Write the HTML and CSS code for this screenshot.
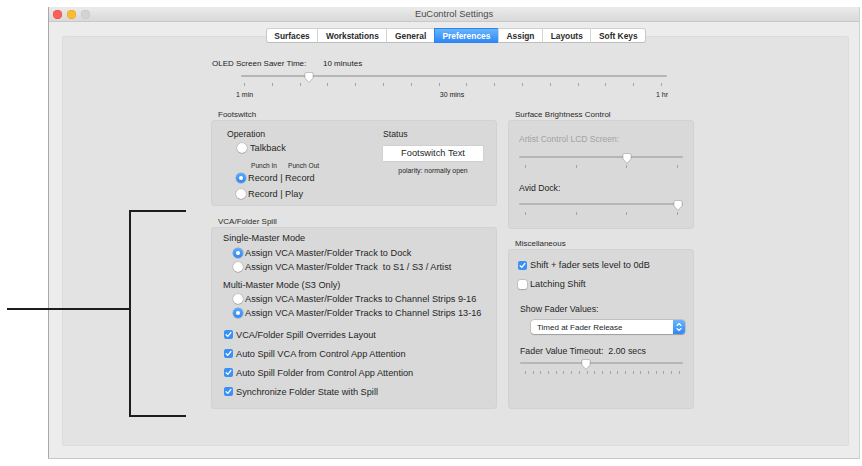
FILE: index.html
```html
<!DOCTYPE html>
<html>
<head>
<meta charset="utf-8">
<title>EuControl Settings</title>
<link rel="stylesheet" href="styles.css">
</head>
<body>
<div class="window">
  <div class="titlebar">
    <div class="lights"><span class="light red"></span><span class="light yellow"></span><span class="light gray"></span></div>
    <div class="title">EuControl Settings</div>
    <div></div>
  </div>
  <div class="content">
    <div class="tabs">
      <div class="tab">Surfaces</div>
      <div class="tab">Workstations</div>
      <div class="tab">General</div>
      <div class="tab active">Preferences</div>
      <div class="tab">Assign</div>
      <div class="tab">Layouts</div>
      <div class="tab">Soft Keys</div>
    </div>
    <div class="panel">
      <div class="oled">
        <div class="oled-head"><span class="oled-label">OLED Screen Saver Time:</span><span>10 minutes</span></div>
        <div class="oled-slider">
          <div class="slider">
            <div class="track"></div>
            <svg class="thumb" style="left:16%" viewBox="0 0 10 11"><path d="M1 1.8 Q1 0.5 2.3 0.5 H7.7 Q9 0.5 9 1.8 V6 L5 10.3 L1 6 Z" fill="#fff" stroke="#b0b0b0" stroke-width="0.6"/></svg>
          </div>
          <div class="ticks">
            <i></i><i></i><i></i><i></i><i></i><i></i><i></i><i></i><i></i><i></i><i></i><i></i><i></i><i></i><i></i><i></i>
          </div>
          <div class="scale"><span class="s-left">1 min</span><span class="s-mid">30 mins</span><span class="s-right">1 hr</span></div>
        </div>
      </div>

      <div class="columns">
        <div class="col col-left">
          <div class="group">
            <div class="group-label">Footswitch</div>
            <div class="box box-foot">
              <div class="op">
                <div class="heading">Operation</div>
                <div class="row big talk"><span class="radio"></span><span>Talkback</span></div>
                <div class="punch"><span class="punch-in">Punch In</span><span>Punch Out</span></div>
                <div class="row big rec1"><span class="radio on"></span><span>Record | Record</span></div>
                <div class="row big rec2"><span class="radio"></span><span>Record | Play</span></div>
              </div>
              <div class="status">
                <div class="heading">Status</div>
                <div class="field">Footswitch Text</div>
                <div class="polarity">polarity: normally open</div>
              </div>
            </div>
          </div>

          <div class="group">
            <div class="group-label">VCA/Folder Spill</div>
            <div class="box box-vca">
              <div class="mode">Single-Master Mode</div>
              <div class="radios">
                <div class="rrow"><span class="radio on"></span><span>Assign VCA Master/Folder Track to Dock</span></div>
                <div class="rrow"><span class="radio"></span><span>Assign VCA Master/Folder Track&nbsp; to S1 / S3 / Artist</span></div>
              </div>
              <div class="mode mode2">Multi-Master Mode (S3 Only)</div>
              <div class="radios radios2">
                <div class="rrow"><span class="radio"></span><span>Assign VCA Master/Folder Tracks to Channel Strips 9-16</span></div>
                <div class="rrow"><span class="radio on"></span><span>Assign VCA Master/Folder Tracks to Channel Strips 13-16</span></div>
              </div>
              <div class="checks">
                <div class="crow"><svg class="check" viewBox="0 0 9 9"><rect x="0" y="0" width="9" height="9" rx="2" fill="#3b90f5"/><path d="M2.1 4.7 L3.8 6.3 L6.9 2.5" stroke="#fff" stroke-width="1.2" fill="none" stroke-linecap="round" stroke-linejoin="round"/></svg><span>VCA/Folder Spill Overrides Layout</span></div>
                <div class="crow"><svg class="check" viewBox="0 0 9 9"><rect x="0" y="0" width="9" height="9" rx="2" fill="#3b90f5"/><path d="M2.1 4.7 L3.8 6.3 L6.9 2.5" stroke="#fff" stroke-width="1.2" fill="none" stroke-linecap="round" stroke-linejoin="round"/></svg><span>Auto Spill VCA from Control App Attention</span></div>
                <div class="crow"><svg class="check" viewBox="0 0 9 9"><rect x="0" y="0" width="9" height="9" rx="2" fill="#3b90f5"/><path d="M2.1 4.7 L3.8 6.3 L6.9 2.5" stroke="#fff" stroke-width="1.2" fill="none" stroke-linecap="round" stroke-linejoin="round"/></svg><span>Auto Spill Folder from Control App Attention</span></div>
                <div class="crow"><svg class="check" viewBox="0 0 9 9"><rect x="0" y="0" width="9" height="9" rx="2" fill="#3b90f5"/><path d="M2.1 4.7 L3.8 6.3 L6.9 2.5" stroke="#fff" stroke-width="1.2" fill="none" stroke-linecap="round" stroke-linejoin="round"/></svg><span>Synchronize Folder State with Spill</span></div>
              </div>
            </div>
          </div>
        </div>

        <div class="col col-right">
          <div class="group">
            <div class="group-label">Surface Brightness Control</div>
            <div class="box box-sbc">
              <div class="disabled lcd">Artist Control LCD Screen:</div>
              <div class="slider s1">
                <div class="track"></div>
                <svg class="thumb" style="left:66%" viewBox="0 0 10 11"><path d="M1 1.8 Q1 0.5 2.3 0.5 H7.7 Q9 0.5 9 1.8 V6 L5 10.3 L1 6 Z" fill="#fff" stroke="#b0b0b0" stroke-width="0.6"/></svg>
              </div>
              <div class="ticks ticks4"><i></i><i></i><i></i><i></i></div>
              <div class="dock">Avid Dock:</div>
              <div class="slider s2">
                <div class="track"></div>
                <svg class="thumb" style="left:97%" viewBox="0 0 10 11"><path d="M1 1.8 Q1 0.5 2.3 0.5 H7.7 Q9 0.5 9 1.8 V6 L5 10.3 L1 6 Z" fill="#fff" stroke="#b0b0b0" stroke-width="0.6"/></svg>
              </div>
              <div class="ticks ticks4"><i></i><i></i><i></i><i></i></div>
            </div>
          </div>

          <div class="group group-misc">
            <div class="group-label">Miscellaneous</div>
            <div class="box box-misc">
              <div class="crow mc1"><svg class="check" viewBox="0 0 9 9"><rect x="0" y="0" width="9" height="9" rx="2" fill="#3b90f5"/><path d="M2.1 4.7 L3.8 6.3 L6.9 2.5" stroke="#fff" stroke-width="1.2" fill="none" stroke-linecap="round" stroke-linejoin="round"/></svg><span>Shift + fader sets level to 0dB</span></div>
              <div class="crow mc2"><span class="check-off"></span><span>Latching Shift</span></div>
              <div class="misc-label sfv">Show Fader Values:</div>
              <div class="popup">
                <span class="popup-text">Timed at Fader Release</span>
                <span class="stepper"><svg viewBox="0 0 12 14" width="12" height="14"><path d="M4 5.5 L6 3.5 L8 5.5 M4 8.5 L6 10.5 L8 8.5" stroke="#fff" stroke-width="1.1" fill="none" stroke-linecap="round" stroke-linejoin="round"/></svg></span>
              </div>
              <div class="misc-label fvt">Fader Value Timeout:&nbsp; 2.00 secs</div>
              <div class="slider s3">
                <div class="track"></div>
                <svg class="thumb" style="left:40.5%" viewBox="0 0 10 11"><path d="M1 1.8 Q1 0.5 2.3 0.5 H7.7 Q9 0.5 9 1.8 V6 L5 10.3 L1 6 Z" fill="#fff" stroke="#b0b0b0" stroke-width="0.6"/></svg>
              </div>
              <div class="ticks ticks21"><i></i><i></i><i></i><i></i><i></i><i></i><i></i><i></i><i></i><i></i><i></i><i></i><i></i><i></i><i></i><i></i><i></i><i></i><i></i><i></i><i></i></div>
            </div>
          </div>
        </div>
      </div>
    </div>
  </div>
</div>

<div class="bracket">
  <div class="b-vert"></div>
  <div class="b-top"></div>
  <div class="b-bottom"></div>
  <div class="b-mid"></div>
</div>
</body>
</html>
```

FILE: styles.css
```css
* { box-sizing: border-box; }

html, body {
  margin: 0;
  padding: 0;
  background: #ffffff;
}

body {
  font-family: "Liberation Sans", Arial, sans-serif;
  color: #262626;
  font-size: 9.2px;
  width: 862px;
  height: 466px;
  overflow: hidden;
  position: relative;
}

/* window */
.window {
  margin: 7px 0 0 48px;
  width: 812px;
  height: 452px;
  background: #ececec;
  border-left: 1px solid #a9a9a9;
  border-right: 1px solid #d0d0d0;
  border-bottom: 1px solid #c8c8c8;
}

.titlebar {
  height: 15px;
  display: grid;
  grid-template-columns: 1fr auto 1fr;
  align-items: center;
  background: linear-gradient(#ebebeb, #d9d9d9);
  border-bottom: 1px solid #c9c9c9;
}

.lights {
  display: flex;
  gap: 5px;
  padding-left: 4px;
}

.light {
  width: 9px;
  height: 9px;
  border-radius: 50%;
  display: block;
}
.red { background: #fb5f57; box-shadow: inset 0 0 0 0.5px #e2463f; }
.yellow { background: #fdbc2e; box-shadow: inset 0 0 0 0.5px #e09e1f; }
.gray { background: #d3d3d3; box-shadow: inset 0 0 0 0.5px #c2c2c2; }

.title {
  font-size: 9.4px;
  color: #4a4a4a;
  line-height: 14px;
}

.content {
  padding-top: 6px;
}

/* tabs */
.tabs {
  display: flex;
  justify-content: center;
  position: relative;
  z-index: 1;
  height: 15px;
  margin-left: 4px;
}

.tab {
  height: 15px;
  line-height: 14px;
  padding: 0 7.6px;
  background: #ffffff;
  border-top: 1px solid #cfcfcf;
  border-bottom: 1px solid #bdbdbd;
  border-left: 1px solid #d4d4d4;
  font-size: 8.4px;
  font-weight: bold;
  color: #2b2b2b;
}
.tab:first-child { border-radius: 3px 0 0 3px; border-left: 1px solid #c8c8c8; }
.tab:last-child { border-radius: 0 3px 3px 0; border-right: 1px solid #c8c8c8; }
.tab.active {
  background: linear-gradient(#6ab4fb, #2e88f6);
  color: #ffffff;
  border-color: #2e84ee;
}

/* panel */
.panel {
  margin: -7px 10px 0 13px;
  height: 410px;
  background: #e3e3e3;
  border-radius: 3px;
  box-shadow: inset 0 0 0 1px #dcdcdc;
  padding-top: 23px;
}

.oled {
  margin-left: 150px;
}

.oled-head {
  display: flex;
  height: 10px;
  line-height: 10px;
  font-size: 8px;
  color: #222;
}
.oled-label { width: 111px; }

.oled-slider {
  margin-left: 29px;
  width: 426px;
  margin-top: 1px;
}

.slider {
  position: relative;
  height: 12px;
}
.track {
  position: absolute;
  left: 0;
  right: 0;
  top: 5px;
  height: 2px;
  border-radius: 1px;
  background: #b6b6b6;
}
.thumb {
  position: absolute;
  top: 2px;
  width: 10px;
  height: 11px;
  margin-left: -5px;
  filter: drop-shadow(0 0.5px 0.5px rgba(0,0,0,0.25));
}

.ticks {
  display: flex;
  justify-content: space-between;
  padding: 0 5px 0 3px;
  height: 4px;
  margin-top: 1px;
}
.ticks i {
  display: block;
  width: 1px;
  height: 3px;
  background: #a4a4a4;
}

.scale {
  display: grid;
  grid-template-columns: 1fr auto 1fr;
  margin: 3px -1px 0 -5px;
  font-size: 7px;
  line-height: 10px;
  color: #222;
}
.s-mid { justify-self: center; }
.s-right { justify-self: end; }

/* columns */
.columns {
  display: flex;
  gap: 11px;
  margin-left: 149px;
  margin-top: 10px;
}
.col { display: flex; flex-direction: column; gap: 11px; }
.col-left { width: 286px; }
.col-right { width: 186px; gap: 10px; }

.group-label {
  font-size: 8px;
  line-height: 10px;
  height: 10px;
  padding-left: 7px;
  color: #2a2a2a;
}

.box {
  background: #d9d9d9;
  border-radius: 4px;
  box-shadow: inset 0 0 0 1px #d2d2d2;
}

/* footswitch */
.box-foot {
  height: 86px;
  display: grid;
  grid-template-columns: 156px 100px;
  padding: 9px 0 0 16px;
}

.heading {
  font-size: 8.7px;
  line-height: 10px;
  height: 10px;
}

.row {
  display: flex;
  align-items: center;
  height: 10px;
  gap: 3px;
}
.talk { margin-top: 4px; padding-left: 10px; }
.rec1 { margin-top: 3px; padding-left: 9px; gap: 2px; }
.rec2 { margin-top: 6px; padding-left: 9px; gap: 2px; }

.punch {
  margin-top: 9px;
  height: 8px;
  line-height: 8px;
  font-size: 6.6px;
  padding-left: 24px;
  display: flex;
}
.punch-in { width: 37px; }

.radio {
  display: block;
  flex: none;
  width: 10px;
  height: 10px;
  border-radius: 50%;
  background: #ffffff;
  box-shadow: 0 0 0 0.5px rgba(0,0,0,0.2), 0 0.5px 1px rgba(0,0,0,0.2);
  position: relative;
}
.radio.on {
  background: linear-gradient(#5aa9f9, #2f87f3);
  box-shadow: 0 0 0 0.5px rgba(30,100,200,0.5);
}
.radio.on::after {
  content: "";
  position: absolute;
  left: 3px;
  top: 3px;
  width: 4px;
  height: 4px;
  border-radius: 50%;
  background: #ffffff;
}

.field {
  margin-top: 7px;
  height: 15px;
  line-height: 15px;
  background: #ffffff;
  text-align: center;
  font-size: 9.3px;
  box-shadow: 0 0 0 0.5px #c8c8c8;
}
.polarity {
  margin-top: 6px;
  text-align: center;
  font-size: 6.9px;
  line-height: 8px;
}

/* VCA */
.box-vca {
  height: 182px;
  padding: 6px 0 0 12px;
}
.mode {
  height: 10px;
  line-height: 10px;
}
.mode2 { margin-top: 6px; }
.radios { margin-top: 3px; padding-left: 10px; }
.radios2 { margin-top: 2px; }
.rrow {
  display: flex;
  align-items: center;
  gap: 2px;
  height: 14px;
}

.checks {
  margin-top: 5px;
  padding-left: 1px;
}
.crow {
  display: flex;
  align-items: center;
  gap: 3px;
  height: 19px;
}
.check {
  display: block;
  flex: none;
  width: 9px;
  height: 9px;
}
.check-off {
  display: block;
  flex: none;
  width: 9px;
  height: 9px;
  border-radius: 2px;
  background: #ffffff;
  box-shadow: 0 0 0 0.5px rgba(0,0,0,0.2), 0 0.5px 1px rgba(0,0,0,0.15);
}

/* surface brightness */
.box-sbc {
  height: 109px;
  padding: 14px 11px 0 11px;
}
.disabled {
  color: #a2a2a2;
  font-size: 8.5px;
  line-height: 10px;
  height: 10px;
}
.s1 { margin-top: 7px; }
.ticks4 { padding: 0 5px 0 6px; margin-top: 2px; }
.dock {
  margin-top: 14px;
  font-size: 8.7px;
  line-height: 10px;
  height: 10px;
  color: #1e1e1e;
}
.s2 { margin-top: 5px; }

/* misc */
.box-misc {
  height: 160px;
  padding: 11px 11px 0 10px;
}
.box-misc .crow { height: 10px; }
.mc2 { margin-top: 9px; }
.misc-label {
  font-size: 8.8px;
  line-height: 10px;
  height: 10px;
  padding-left: 2px;
}
.sfv { margin-top: 15px; }
.popup {
  margin: 6px 0 0 13px;
  width: 154px;
  height: 14px;
  background: #ffffff;
  border-radius: 3px;
  box-shadow: 0 0 0 0.5px rgba(0,0,0,0.18), 0 0.5px 1px rgba(0,0,0,0.2);
  display: flex;
  align-items: center;
  justify-content: space-between;
  font-size: 8px;
}
.popup-text { padding-left: 6px; }
.stepper {
  width: 12px;
  height: 14px;
  border-radius: 0 3px 3px 0;
  background: linear-gradient(#6ab4fb, #2e88f6);
  display: block;
}
.stepper svg { display: block; }
.fvt { margin-top: 12px; }
.s3 { margin: 1px 0 0 2px; }
.ticks21 { margin-left: 2px; padding: 0 3px 0 5px; margin-top: 2px; }

/* annotation bracket */
.bracket div {
  position: absolute;
  background: #1d1d1d;
}
.b-vert { left: 129px; top: 210px; width: 2px; height: 207px; }
.b-top { left: 129px; top: 210px; width: 57px; height: 2px; }
.b-bottom { left: 129px; top: 415px; width: 57px; height: 2px; }
.b-mid { left: 7px; top: 308px; width: 122px; height: 2px; }
```
